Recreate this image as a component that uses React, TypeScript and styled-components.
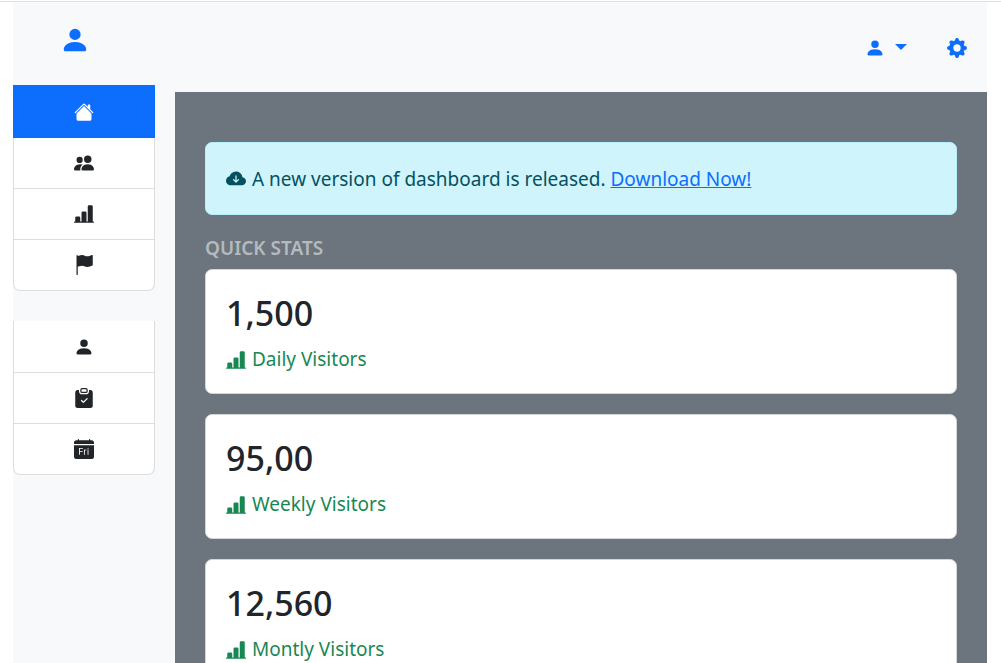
import React from 'react';
import styled, { createGlobalStyle } from 'styled-components';
import {
  BsBarChartLineFill,
  BsCalendarDayFill,
  BsClipboardCheckFill,
  BsCloudArrowDownFill,
  BsFlagFill,
  BsGearFill,
  BsHouseFill,
  BsPeopleFill,
  BsPersonFill,
} from 'react-icons/bs';

const GlobalStyle = createGlobalStyle`
  *, *::before, *::after { box-sizing: border-box; }
  html { scrollbar-width: none; }
  body {
    margin: 0;
    background: #fff;
    color: #212529;
    font-family: "Segoe UI", "Noto Sans", "Open Sans", sans-serif;
    font-size: 19px;
    line-height: 30px;
  }
`;

const Page = styled.div`
  margin-top: 1px;
  border-top: 1px solid #dee2e6;
  padding: 0 14px 0 13px;
`;

const Shell = styled.div`
  display: grid;
  grid-template-columns: 162px minmax(0, 1fr);
  min-height: calc(100vh - 2px);
  background: #f8f9fa;
`;

const Sidebar = styled.aside`
  padding-right: 20px;
`;

const Brand = styled.a`
  display: flex;
  align-items: center;
  height: 83px;
  padding: 0 0 8px 47px;
  color: #0d6efd;
  font-size: 30px;
`;

const NavList = styled.nav`
  display: flex;
  flex-direction: column;
  margin-bottom: 30px;
  border: 1px solid #dcdddf;
  border-top: 0;
  border-radius: 0 0 7px 7px;
  background: #fff;
`;

const NavItem = styled.a<{ $active?: boolean }>`
  display: flex;
  align-items: center;
  justify-content: center;
  height: 51px;
  color: #212529;
  font-size: 20px;

  &:not(:last-child) {
    border-bottom: 1px solid #dcdddf;
  }

  &:first-child {
    height: 52px;
    padding-top: 1px;
  }

  &:last-child {
    height: 50px;
  }

  ${(p) =>
    p.$active &&
    `
    &&:first-child {
      height: 53px;
      margin: 0 -1px;
      padding-top: 2px;
      border-color: #0d6efd;
      background: #0d6efd;
      color: #fff;
    }
  `}
`;

const Main = styled.div`
  display: flex;
  flex-direction: column;
`;

const Header = styled.header`
  display: flex;
  align-items: center;
  justify-content: flex-end;
  gap: 40px;
  height: 90px;
  padding: 2px 20px 0 0;
`;

const HeaderButton = styled.button`
  display: flex;
  align-items: center;
  gap: 10px;
  padding: 0;
  border: 0;
  background: none;
  color: #0d6efd;
  font-size: 20px;
  cursor: pointer;
`;

const Caret = styled.span`
  margin-bottom: 2px;
  border: 6px solid transparent;
  border-top-color: currentColor;
  border-bottom: 0;
`;

const Content = styled.main`
  flex: 1;
  padding: 50px 30px 0;
  background: #6c757d;
`;

const Alert = styled.div`
  display: flex;
  align-items: center;
  gap: 6px;
  margin-bottom: 20px;
  padding: 21px 20px 20px;
  border: 1px solid #b6effb;
  border-radius: 7px;
  background: #cff4fc;
  color: #055160;

  svg { font-size: 20px; }
  a { color: #0d6efd; }
`;

const SectionTitle = styled.h2`
  margin: 0 0 8px;
  color: #b5babe;
  font-size: 19px;
  font-weight: 600;
  line-height: 26px;
  text-transform: uppercase;
`;

const Card = styled.section`
  margin-bottom: 20px;
  padding: 21px 20px 19px;
  border: 1px solid #d3d5d7;
  border-radius: 7px;
  background: #fff;
`;

const Value = styled.h3`
  margin: 0 0 10px;
  font-size: 34px;
  font-weight: 500;
  line-height: 44px;
`;

const Label = styled.p`
  display: flex;
  align-items: center;
  gap: 6px;
  margin: 0;
  color: #198754;
  line-height: 29px;

  svg { font-size: 20px; }
`;

const mainLinks = [
  { name: 'Home', Icon: BsHouseFill, active: true },
  { name: 'Users', Icon: BsPeopleFill },
  { name: 'Statistics', Icon: BsBarChartLineFill },
  { name: 'Flags', Icon: BsFlagFill },
];

const personalLinks = [
  { name: 'Profile', Icon: BsPersonFill },
  { name: 'Tasks', Icon: BsClipboardCheckFill },
  { name: 'Calendar', Icon: BsCalendarDayFill },
];

const stats = [
  { value: '1,500', label: 'Daily Visitors' },
  { value: '95,00', label: 'Weekly Visitors' },
  { value: '12,560', label: 'Montly Visitors' },
];

export default function App() {
  return (
    <>
      <GlobalStyle />
      <Page>
        <Shell>
          <Sidebar>
            <Brand href="#" aria-label="Dashboard">
              <BsPersonFill />
            </Brand>
            <NavList aria-label="Main">
              {mainLinks.map(({ name, Icon, active }) => (
                <NavItem key={name} href="#" aria-label={name} $active={active}>
                  <Icon />
                </NavItem>
              ))}
            </NavList>
            <NavList aria-label="Personal">
              {personalLinks.map(({ name, Icon }) => (
                <NavItem key={name} href="#" aria-label={name}>
                  <Icon />
                </NavItem>
              ))}
            </NavList>
          </Sidebar>
          <Main>
            <Header>
              <HeaderButton type="button" aria-label="Account" aria-haspopup="menu">
                <BsPersonFill />
                <Caret />
              </HeaderButton>
              <HeaderButton type="button" aria-label="Settings">
                <BsGearFill />
              </HeaderButton>
            </Header>
            <Content>
              <Alert role="alert">
                <BsCloudArrowDownFill />
                <span>
                  A new version of dashboard is released. <a href="#">Download Now!</a>
                </span>
              </Alert>
              <SectionTitle>Quick stats</SectionTitle>
              {stats.map(({ value, label }) => (
                <Card key={label}>
                  <Value>{value}</Value>
                  <Label>
                    <BsBarChartLineFill />
                    {label}
                  </Label>
                </Card>
              ))}
            </Content>
          </Main>
        </Shell>
      </Page>
    </>
  );
}
